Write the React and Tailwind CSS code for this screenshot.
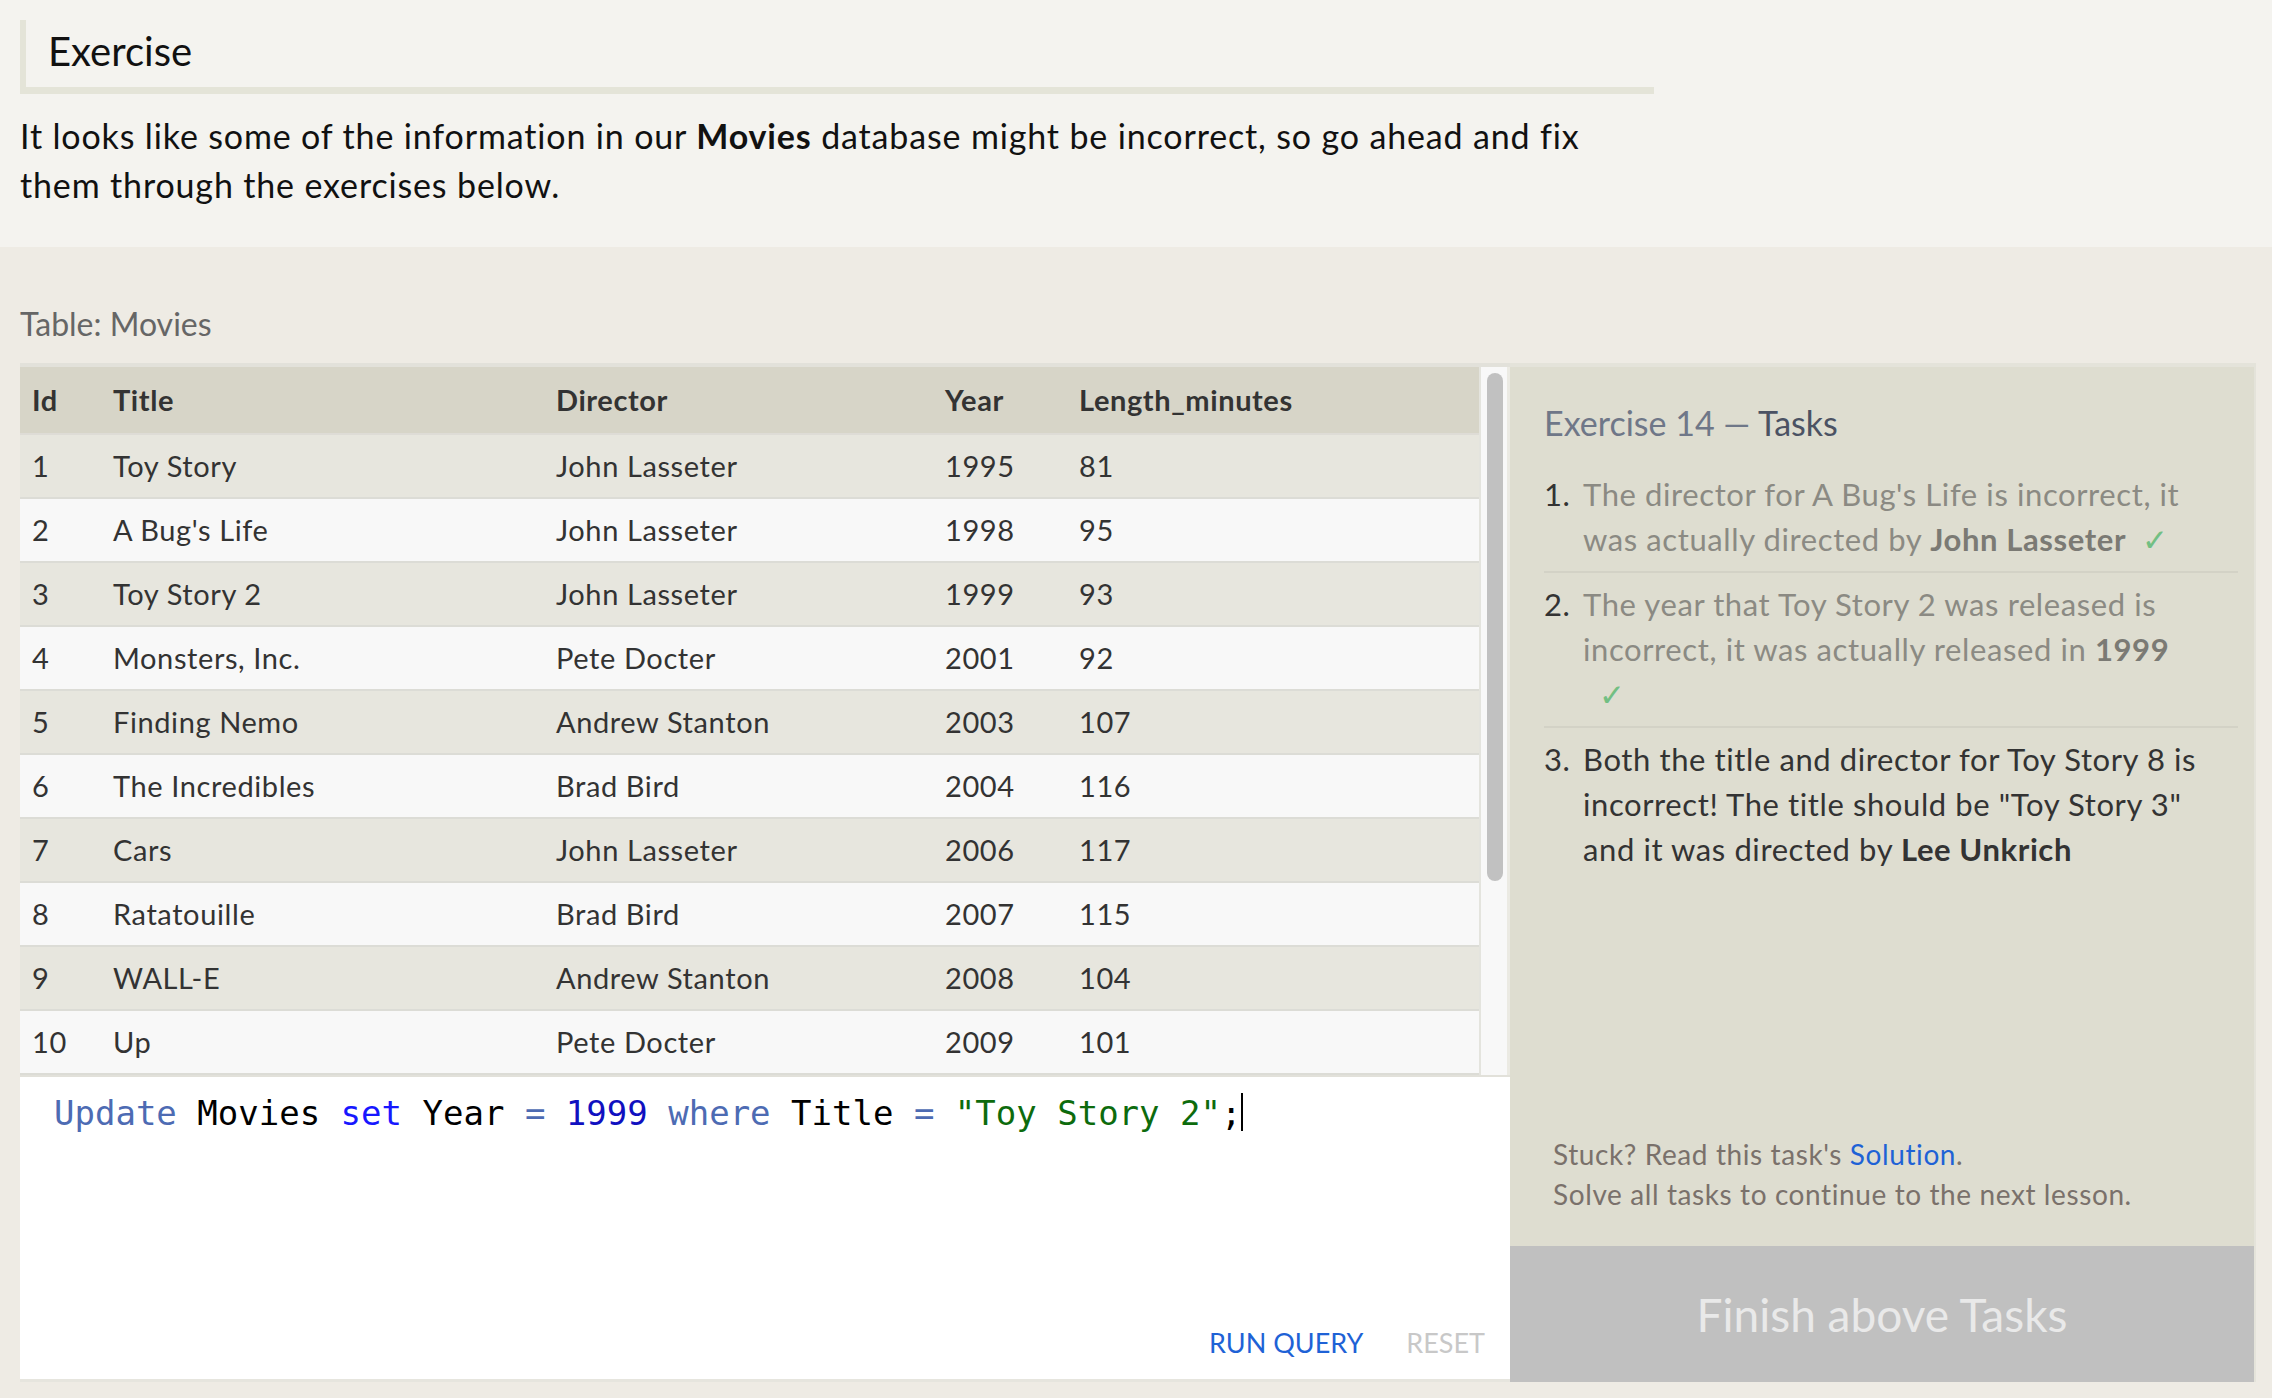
const movies = [
  [1, "Toy Story", "John Lasseter", 1995, 81],
  [2, "A Bug's Life", "John Lasseter", 1998, 95],
  [3, "Toy Story 2", "John Lasseter", 1999, 93],
  [4, "Monsters, Inc.", "Pete Docter", 2001, 92],
  [5, "Finding Nemo", "Andrew Stanton", 2003, 107],
  [6, "The Incredibles", "Brad Bird", 2004, 116],
  [7, "Cars", "John Lasseter", 2006, 117],
  [8, "Ratatouille", "Brad Bird", 2007, 115],
  [9, "WALL-E", "Andrew Stanton", 2008, 104],
  [10, "Up", "Pete Docter", 2009, 101],
];

function Check() {
  return <span className="ml-[16px] inline-block text-[#72bf83]">✓</span>;
}

function MoviesTable() {
  return (
    <div className="flex border-t-4 border-b-2 border-[#e2e1da]">
      <table className="flex-1 table-fixed border-collapse text-left text-[29px] text-[#333]">
        <colgroup>
          <col className="w-[81px]" />
          <col className="w-[443px]" />
          <col className="w-[389px]" />
          <col className="w-[134px]" />
          <col />
        </colgroup>
        <thead>
          <tr className="h-[67px] border-b-2 border-[#dedcd6] bg-[#d7d5c8]">
            {["Id", "Title", "Director", "Year", "Length_minutes"].map((h) => (
              <th key={h} className="pl-[12px] font-bold">
                {h}
              </th>
            ))}
          </tr>
        </thead>
        <tbody>
          {movies.map((m, i) => (
            <tr
              key={m[0]}
              className={`h-[64px] border-b-2 border-[#dcdcd6] ${i % 2 === 0 ? "bg-[#e7e6de]" : "bg-[#f8f8f8]"}`}
            >
              {m.map((v, j) => (
                <td key={j} className="pl-[12px]">
                  {v}
                </td>
              ))}
            </tr>
          ))}
        </tbody>
      </table>
      <div className="w-[31px] border-l-2 border-r-[3px] border-l-[#e4e4de] border-r-[#ebeae3] bg-[#f8f8f8] pl-[6px] pt-[6px]">
        <div className="h-[508px] w-[16px] rounded-full bg-[#c1c1c1]" />
      </div>
    </div>
  );
}

function Editor() {
  return (
    <div className="flex h-[305px] flex-col border-b-[3px] border-[#e6e5de] bg-white">
      <div className="pl-[34px] pt-[10px] font-['DejaVu_Sans_Mono',monospace] text-[34px] leading-[48px] tracking-normal text-black">
        <span className="text-[#4d6bb3]">Update</span> Movies{" "}
        <span className="text-[#1717ff]">set</span> Year{" "}
        <span className="text-[#4d6bb3]">=</span>{" "}
        <span className="text-[#1010c0]">1999</span>{" "}
        <span className="text-[#4d6bb3]">where</span> Title{" "}
        <span className="text-[#4d6bb3]">=</span>{" "}
        <span className="text-[#0d6b0d]">"Toy Story 2"</span>;
        <span className="inline-block h-[38px] w-[2px] translate-y-[6px] bg-black" />
      </div>
      <div className="mt-auto flex justify-end gap-[43px] pb-[18px] pr-[25px] text-[27px] leading-[36px] tracking-normal">
        <span className="text-[#1e62d6]">RUN QUERY</span>
        <span className="text-[#c8c8c8]">RESET</span>
      </div>
    </div>
  );
}

function TaskPanel() {
  return (
    <div className="flex w-[746px] flex-col border-t-4 border-r-2 border-[#e4e3da] bg-[#deddd0]">
      <div className="pl-[34px] pr-[16px] pt-[35px]">
        <h2 className="text-[34px] leading-[42px] tracking-normal text-[#6f7788]">
          Exercise 14 — <span className="text-[#4b5263]">Tasks</span>
        </h2>
        <ol className="mt-[19px] text-[31px] leading-[45px]">
          <li className="flex border-b-2 border-[#d3d2c6] py-[9px]">
            <span className="w-[39px] shrink-0 text-[#333]">1.</span>
            <p className="w-[625px] text-[#8b8a83]">
              The director for A Bug's Life is incorrect, it was actually directed by{" "}
              <b className="text-[#7b7a74]">John Lasseter</b>
              <Check />
            </p>
          </li>
          <li className="flex border-b-2 border-[#d3d2c6] py-[9px]">
            <span className="w-[39px] shrink-0 text-[#333]">2.</span>
            <p className="w-[625px] text-[#8b8a83]">
              The year that Toy Story 2 was released is incorrect, it was actually released in{" "}
              <b className="text-[#7b7a74]">1999</b>
              <Check />
            </p>
          </li>
          <li className="flex py-[9px]">
            <span className="w-[39px] shrink-0 text-[#333]">3.</span>
            <p className="w-[625px] text-[#333]">
              Both the title and director for Toy Story 8 is incorrect! The title should be "Toy
              Story 3" and it was directed by <b>Lee Unkrich</b>
            </p>
          </li>
        </ol>
      </div>
      <div className="mt-auto pb-[32px] pl-[43px] text-[28px] leading-[40px] text-[#7a716b]">
        <p>
          Stuck? Read this task's <span className="text-[#1e62d6]">Solution</span>.
        </p>
        <p>Solve all tasks to continue to the next lesson.</p>
      </div>
      <div className="flex h-[136px] items-center justify-center bg-[#c0c0c0] text-[46px] tracking-normal text-[#e9e9e9]">
        Finish above Tasks
      </div>
    </div>
  );
}

export default function App() {
  return (
    <div className="h-[1398px] w-full overflow-hidden bg-[#eeebe4] font-[Lato,'Open_Sans',sans-serif] tracking-[0.6px] text-[#222]">
      <section className="h-[247px] bg-[#f4f3ef] pl-[20px] pt-[20px]">
        <div className="w-[1634px] border-b-[7px] border-l-[6px] border-[#e4e4d8] pb-[12px] pl-[22px] pt-[7px]">
          <h1 className="text-[40px] leading-[48px] tracking-normal text-[#111]">Exercise</h1>
        </div>
        <p className="mt-[17px] max-w-[1640px] text-[34px] leading-[49px] tracking-[0.85px] text-[#111]">
          It looks like some of the information in our <b>Movies</b> database might be incorrect,
          so go ahead and fix them through the exercises below.
        </p>
      </section>
      <section className="pl-[20px] pt-[58px]">
        <div className="mb-[20px] text-[32px] leading-[38px] tracking-normal text-[#666]">Table: Movies</div>
        <div className="flex">
          <div className="flex w-[1490px] flex-col">
            <MoviesTable />
            <Editor />
          </div>
          <TaskPanel />
        </div>
      </section>
    </div>
  );
}
